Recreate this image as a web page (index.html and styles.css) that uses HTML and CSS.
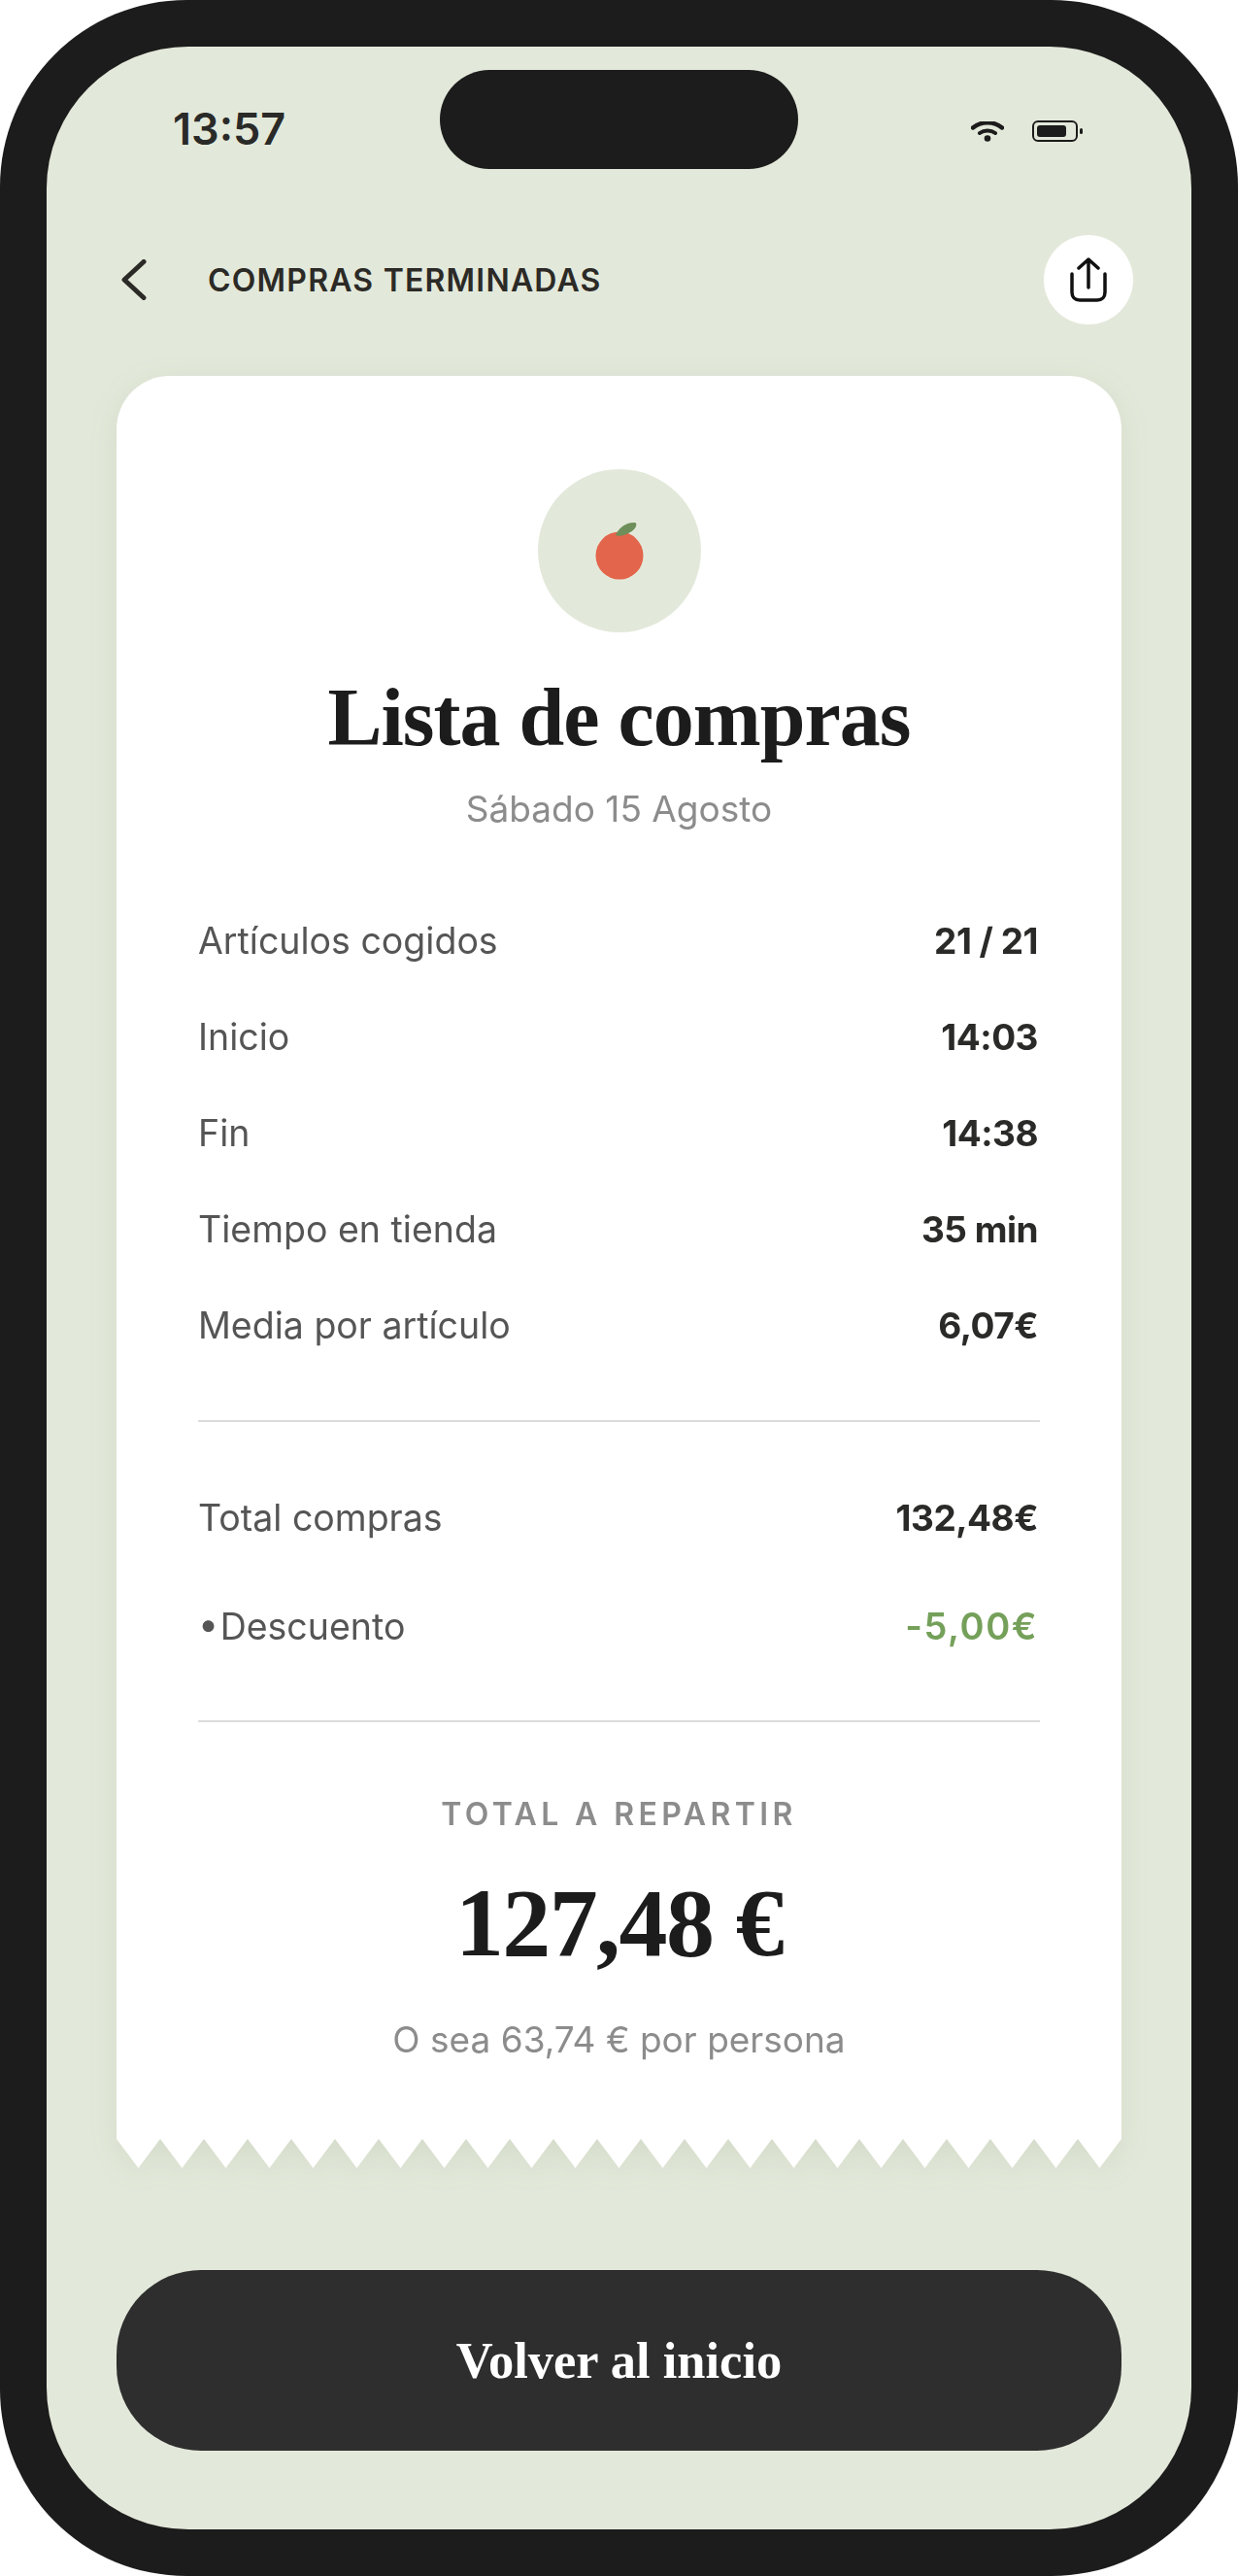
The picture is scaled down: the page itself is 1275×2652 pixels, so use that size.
FILE: index.html
```html
<!DOCTYPE html>
<html lang="es">
<head>
    <meta charset="UTF-8">
    <meta name="viewport" content="width=device-width, initial-scale=1.0">
    <title>Compras terminadas</title>
    <link rel="stylesheet" href="styles.css">
</head>
<body>

    <div class="phone">
        <div class="screen">
            <!-- barra de estado -->
            <div class="status-bar">
                <span class="time">13:57</span>
                <div class="island"></div>
                <div class="status-icons">
                    <svg class="wifi" width="34" height="21" viewBox="0 0 34 21">
                        <path d="M2 6.500C10 -0.500 24 -0.500 32 6.500" fill="none" stroke="#1c1c1c" stroke-width="4.400" stroke-linecap="round"/>
                        <path d="M9 12C13.500 8.600 20.500 8.600 25 12" fill="none" stroke="#1c1c1c" stroke-width="4" stroke-linecap="round"/>
                        <circle cx="17" cy="17.500" r="3.300" fill="#1c1c1c"/>
                    </svg>
                    <svg class="battery" width="52" height="22" viewBox="0 0 52 22">
                        <rect x="1" y="1" width="45" height="20" rx="5" fill="none" stroke="#1c1c1c" stroke-width="2"/>
                        <rect x="5" y="5" width="30" height="12" rx="3" fill="#1c1c1c"/>
                        <rect x="49" y="8" width="3" height="6" rx="1.500" fill="#1c1c1c"/>
                    </svg>
                </div>
            </div>

            <!-- encabezado -->
            <header class="top-bar">
                <svg class="back" width="26" height="42" viewBox="0 0 26 42">
                    <path d="M23 2.500L3 21L23 39.500" fill="none" stroke="#2c2a26" stroke-width="5" stroke-linecap="round" stroke-linejoin="round"/>
                </svg>
                <h2 class="top-title">COMPRAS TERMINADAS</h2>
                <button class="share">
                    <svg width="38" height="46" viewBox="0 0 38 46">
                        <path d="M19 31V2M9 11L19 2L29 11M2 17V36C2 41 5 44 10 44H28C33 44 36 41 36 36V17" fill="none" stroke="#111" stroke-width="3.500" stroke-linecap="round" stroke-linejoin="round"/>
                    </svg>
                </button>
            </header>

            <!-- ticket -->
            <section class="ticket">
                <div class="ticket-body">
                    <div class="fruit-badge">
                        <svg width="50" height="62" viewBox="0 0 50 62">
                            <circle cx="25" cy="36" r="24.500" fill="#e3654b"/>
                            <path d="M21 15C24 7 33 1 41 2C44 3 42 9 36 12C31 15 24 17 21 15Z" fill="#6e8f5a"/>
                        </svg>
                    </div>
                    <h1 class="ticket-title">Lista de compras</h1>
                    <p class="ticket-date">Sábado 15 Agosto</p>

                    <ul class="rows">
                        <li class="row"><span>Artículos cogidos</span><strong>21 / 21</strong></li>
                        <li class="row"><span>Inicio</span><strong>14:03</strong></li>
                        <li class="row"><span>Fin</span><strong>14:38</strong></li>
                        <li class="row"><span>Tiempo en tienda</span><strong>35 min</strong></li>
                        <li class="row"><span>Media por artículo</span><strong>6,07€</strong></li>
                    </ul>

                    <ul class="rows rows-totals">
                        <li class="row"><span>Total compras</span><strong>132,48€</strong></li>
                        <li class="row"><span class="row-sub">• Descuento</span><strong class="discount">-5,00€</strong></li>
                    </ul>

                    <div class="summary">
                        <p class="summary-label">TOTAL A REPARTIR</p>
                        <p class="summary-amount">127,48 €</p>
                        <p class="summary-note">O sea 63,74 € por persona</p>
                    </div>
                </div>
                <!-- borde dentado -->
                <svg class="teeth" width="1035" height="30">
                    <defs>
                        <pattern id="tooth" width="45" height="30" patternUnits="userSpaceOnUse">
                            <polygon points="0,0 45,0 22.500,30" fill="#fff"/>
                        </pattern>
                    </defs>
                    <rect width="1035" height="30" fill="url(#tooth)"/>
                </svg>
            </section>

            <button class="home-btn">Volver al inicio</button>
        </div>
    </div>

</body>
</html>
```

FILE: styles.css
```css
/* página */
body {
    margin: 0;
    background-color: #fff;
    font-family: "Inter", "Noto Sans", sans-serif;
}

.phone {
    width: 1275px;
    height: 2652px;
    box-sizing: border-box;
    padding: 48px;
    background-color: #1c1c1c;
    border-radius: 192px;
}

.screen {
    height: 2556px;
    box-sizing: border-box;
    padding: 24px 72px 0;
    background-color: #e3e9da;
    border-radius: 146px;
}

/* barra de estado */
.status-bar {
    display: flex;
    align-items: flex-start;
    height: 102px;
    padding-left: 58px;
}

.time {
    width: 275px;
    margin-top: 36px;
    font-size: 45px;
    font-weight: 600;
    line-height: 50px;
    color: #2a2a28;
}

.island {
    width: 369px;
    height: 102px;
    background-color: #1c1c1c;
    border-radius: 51px;
}

.status-icons {
    display: flex;
    align-items: center;
    gap: 29px;
    margin: 52px 40px 0 auto;
}

.wifi, .battery {
    display: block;
}

/* encabezado */
.top-bar {
    display: flex;
    align-items: center;
    height: 92px;
    margin: 68px -12px 0 5px;
}

.back {
    flex-shrink: 0;
}

.top-title {
    flex: 1;
    margin: 0 0 0 63px;
    font-size: 32px;
    font-weight: 600;
    letter-spacing: 1.2px;
    color: #2c2a26;
}

.share {
    display: flex;
    align-items: center;
    justify-content: center;
    width: 92px;
    height: 92px;
    padding: 0;
    border: 0;
    border-radius: 50%;
    background-color: #fff;
}

/* ticket */
.ticket {
    margin-top: 53px;
    filter: drop-shadow(0 6px 14px rgba(90, 110, 70, 0.1));
}

.ticket-body {
    height: 1815px;
    box-sizing: border-box;
    padding: 96px 84px 0;
    background-color: #fff;
    border-radius: 55px 55px 0 0;
}

.teeth {
    display: block;
}

.fruit-badge {
    display: flex;
    align-items: flex-start;
    justify-content: center;
    width: 168px;
    height: 168px;
    margin: 0 auto;
    padding-top: 53px;
    box-sizing: border-box;
    background-color: #e3e9da;
    border-radius: 50%;
}

.ticket-title {
    margin: 40px 0 0;
    font-family: "Liberation Serif", serif;
    font-size: 84px;
    font-weight: 700;
    line-height: 96px;
    letter-spacing: -1px;
    text-align: center;
    color: #1c1c1c;
}

.ticket-date {
    margin: 24px 0 0;
    font-size: 37px;
    line-height: 44px;
    text-align: center;
    color: #8c8c8c;
}

.rows {
    list-style: none;
    margin: 64px 0 0;
    padding: 0 2px 48px 0;
    border-bottom: 2px solid #dcdcdc;
}

.row {
    display: flex;
    justify-content: space-between;
    align-items: center;
    height: 99px;
    font-size: 37.5px;
    color: #555;
}

.row strong {
    font-size: 37px;
    font-weight: 700;
    color: #2a2a28;
    letter-spacing: -0.5px;
}

.rows-totals {
    margin-top: 42px;
    padding-bottom: 41px;
}

.rows-totals .row {
    height: 112px;
}

.row-sub {
    word-spacing: -9px;
}

.row .discount {
    font-size: 38px;
    font-weight: 600;
    letter-spacing: 1.500px;
    color: #75a05a;
}

.summary {
    text-align: center;
}

.summary-label {
    margin: 75px 0 0;
    font-size: 32px;
    font-weight: 600;
    line-height: 40px;
    letter-spacing: 4.400px;
    color: #8c8c8c;
}

.summary-amount {
    margin: 37px 0 0;
    font-family: "Liberation Serif", serif;
    font-size: 100px;
    font-weight: 700;
    line-height: 110px;
    letter-spacing: -1.600px;
    color: #1c1c1c;
}

.summary-note {
    margin: 43px 0 0;
    font-size: 37px;
    line-height: 44px;
    color: #8c8c8c;
}

.home-btn {
    display: block;
    width: 100%;
    height: 186px;
    margin-top: 105px;
    border: 0;
    border-radius: 87px;
    background-color: #2e2e2e;
    font-family: "Liberation Serif", serif;
    font-size: 52.500px;
    font-weight: 700;
    color: #fff;
}
```
